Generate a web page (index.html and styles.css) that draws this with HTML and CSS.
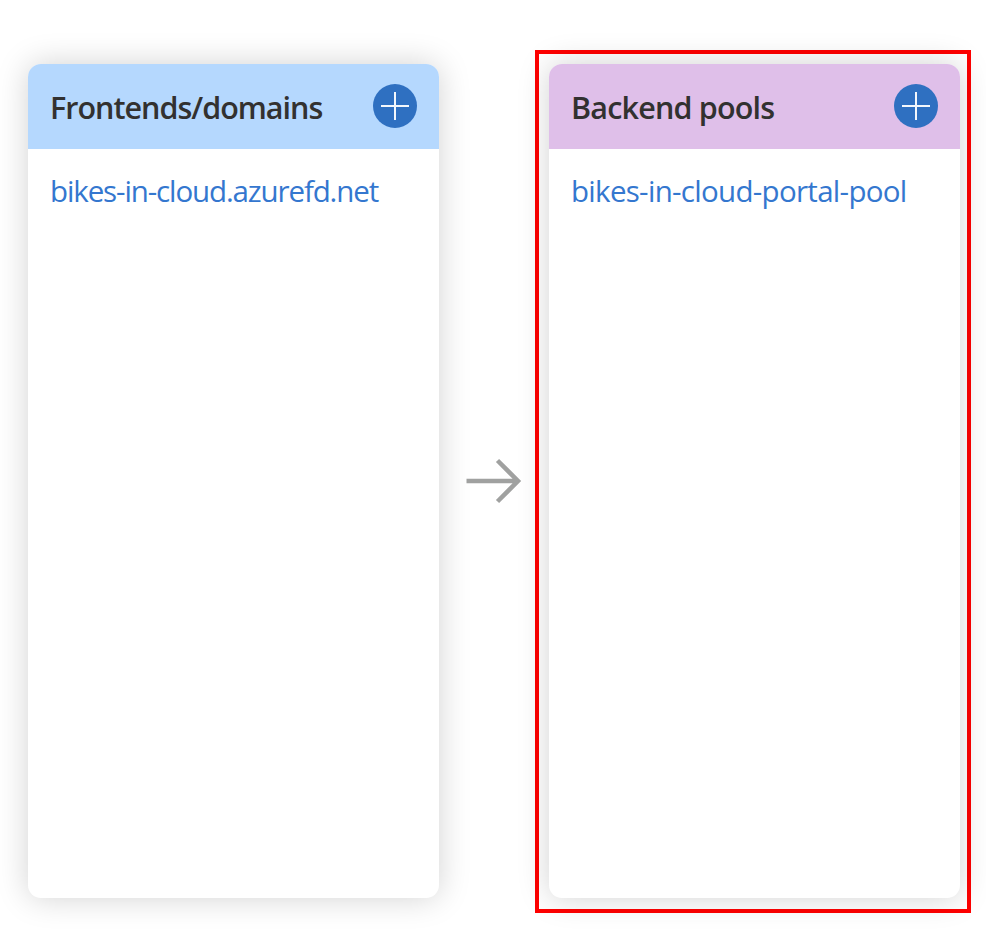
FILE: index.html
```html
<!DOCTYPE html>
<html lang="en">
<head>
<meta charset="utf-8">
<title>Front Door designer</title>
<link rel="stylesheet" href="styles.css">
</head>
<body>
<main class="designer">
  <section class="card frontends">
    <header class="card-header">
      <h2><span class="title-frontends">Frontends/domains</span></h2>
      <button class="add" aria-label="Add"><svg viewBox="0 0 44 44"><path d="M8 22H36M22 8V36"/></svg></button>
    </header>
    <a class="item item-domain">bikes-in-cloud.azurefd.net</a>
  </section>
  <svg class="arrow" viewBox="0 0 58 46"><path d="M1.500 23H53M32.500 2.500L53 23L32.500 43.500"/></svg>
  <div class="highlight">
    <section class="card backends">
      <header class="card-header">
        <h2><span class="title-backends">Backend pools</span></h2>
        <button class="add" aria-label="Add"><svg viewBox="0 0 44 44"><path d="M8 22H36M22 8V36"/></svg></button>
      </header>
      <a class="item item-pool">bikes-in-cloud-portal-pool</a>
    </section>
  </div>
</main>
</body>
</html>
```
FILE: styles.css
```css
* { box-sizing: border-box; }
body {
  margin: 0;
  background: #fff;
  font-family: "Open Sans", "Noto Sans", sans-serif;
  overflow: hidden;
}
.designer {
  display: flex;
  align-items: flex-start;
  height: 944px;
  padding: 50px 0 0 28px;
}
.card {
  width: 411px;
  height: 834px;
  flex: none;
  border-radius: 13px;
  background: #fff;
  box-shadow: 0 0 32px rgba(0, 0, 0, 0.18);
}
.frontends { margin-top: 14px; }
.card-header {
  display: flex;
  justify-content: space-between;
  height: 85px;
  padding: 20px 22px 0 22px;
  border-radius: 13px 13px 0 0;
  background: #b5d8fe;
}
.backends .card-header { background: #dfbfe9; }
h2 {
  margin: 0;
  font-size: 30.5px;
  line-height: 47px;
  font-weight: 600;
  color: #323130;
  white-space: nowrap;
}
.title-frontends { letter-spacing: -1px; }
.title-backends { letter-spacing: -0.82px; }
.add {
  width: 44px;
  height: 44px;
  padding: 0;
  border: 0;
  border-radius: 50%;
  background: #2f70c1;
}
.add svg { display: block; width: 44px; height: 44px; }
.add path { fill: none; stroke: #f3f7fc; stroke-width: 2; }
.item {
  display: inline-block;
  margin: 21px 0 0 22px;
  font-size: 29.5px;
  line-height: 42px;
  color: #3477cf;
  white-space: nowrap;
}
.item-domain { letter-spacing: -1.12px; }
.item-pool { letter-spacing: -0.7px; }
.arrow {
  flex: none;
  width: 58px;
  height: 46px;
  margin: 408px 12px 0 26px;
}
.arrow path { fill: none; stroke: #a0a1a0; stroke-width: 4.5; }
.highlight {
  flex: none;
  width: 436px;
  height: 863px;
  padding: 10px;
  border: 4px solid #f00;
}
```
